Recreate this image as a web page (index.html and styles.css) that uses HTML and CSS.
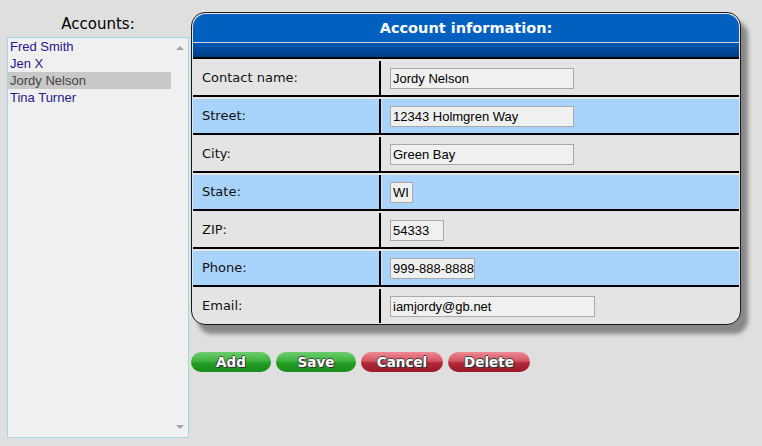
FILE: index.html
```html
<!DOCTYPE html>
<html lang="en">
<head>
	<meta charset="UTF-8">
	<title>Accounts</title>
	<link rel="stylesheet" href="styles.css">
</head>
<body>
	<div class="page">
		<div class="accounts">
			<div class="accounts-title">Accounts:</div>
			<div class="listbox">
				<ul class="list">
					<li>Fred Smith</li>
					<li>Jen X</li>
					<li class="selected">Jordy Nelson</li>
					<li>Tina Turner</li>
				</ul>
				<div class="scroll">
					<span class="arrow-up"></span>
					<span class="arrow-down"></span>
				</div>
			</div>
		</div>

		<div class="main">
			<div class="panel">
				<div class="panel-head">Account information:</div>
				<div class="panel-bar"></div>
				<div class="row">
					<div class="cell-label">Contact name:</div>
					<div class="cell-value"><input class="field w-long" type="text" value="Jordy Nelson"></div>
				</div>
				<div class="row alt">
					<div class="cell-label">Street:</div>
					<div class="cell-value"><input class="field w-long" type="text" value="12343 Holmgren Way"></div>
				</div>
				<div class="row">
					<div class="cell-label">City:</div>
					<div class="cell-value"><input class="field w-long" type="text" value="Green Bay"></div>
				</div>
				<div class="row alt">
					<div class="cell-label">State:</div>
					<div class="cell-value"><input class="field w-state" type="text" value="WI"></div>
				</div>
				<div class="row">
					<div class="cell-label">ZIP:</div>
					<div class="cell-value"><input class="field w-zip" type="text" value="54333"></div>
				</div>
				<div class="row alt">
					<div class="cell-label">Phone:</div>
					<div class="cell-value"><input class="field w-phone" type="text" value="999-888-8888"></div>
				</div>
				<div class="row last">
					<div class="cell-label">Email:</div>
					<div class="cell-value"><input class="field w-email" type="text" value="iamjordy@gb.net"></div>
				</div>
			</div>

			<div class="buttons">
				<a class="btn green" href="javascript:;">Add</a>
				<a class="btn green" href="javascript:;">Save</a>
				<a class="btn red wide" href="javascript:;">Cancel</a>
				<a class="btn red wide" href="javascript:;">Delete</a>
			</div>
		</div>
	</div>
</body>
</html>
```

FILE: styles.css
```css
* {
	margin: 0;
	padding: 0;
	box-sizing: border-box;
}
li {
	list-style: none;
}
a {
	text-decoration: none;
}
body {
	background: #dfdfdf;
	font-family: "DejaVu Sans", Verdana, sans-serif;
}
.page {
	display: flex;
	padding: 12px 0 0 7px;
}

/* accounts list */
.accounts {
	width: 182px;
}
.accounts-title {
	height: 25px;
	line-height: 25px;
	font-size: 15px;
	text-align: center;
	color: #000;
}
.listbox {
	display: flex;
	height: 401px;
	background: #f0f0f0;
	border: 1px solid #a6d6e6;
}
.list {
	flex: 1;
	font-family: "Liberation Sans", Arial, sans-serif;
	font-size: 13px;
	color: #26188c;
}
.list li {
	height: 17px;
	line-height: 17px;
	padding-left: 2px;
}
.list li.selected {
	background: #c8c8c8;
	color: #444;
}
.scroll {
	width: 17px;
	display: flex;
	flex-direction: column;
	justify-content: space-between;
	align-items: center;
	padding: 8px 0 8px 0;
}
.arrow-up, .arrow-down {
	width: 0;
	height: 0;
	border-left: 4px solid transparent;
	border-right: 4px solid transparent;
}
.arrow-up {
	border-bottom: 4px solid #a3a3a3;
}
.arrow-down {
	border-top: 4px solid #a3a3a3;
}

/* account panel */
.main {
	margin-left: 2px;
}
.panel {
	width: 550px;
	background: #e4e4e4;
	border: 1px solid #1a1a1a;
	border-radius: 14px;
	padding: 1px;
	box-shadow: 7px 9px 4px #888;
}
.panel-head {
	height: 28px;
	line-height: 28px;
	background: #0060c0;
	border-radius: 13px 13px 0 0;
	color: #fff;
	font-size: 14.5px;
	font-weight: bold;
	text-align: center;
	border-bottom: 1px solid #d6d6d6;
	height: 29px;
}
.panel-bar {
	height: 16px;
	background: linear-gradient(#0058b2, #003c86);
	border-bottom: 2px solid #000;
}
.row {
	display: flex;
	padding-top: 2px;
	border-bottom: 2px solid #000;
}
.row.last {
	border-bottom: none;
	border-radius: 0 0 13px 13px;
	overflow: hidden;
}
.cell-label {
	width: 188px;
	height: 34px;
	line-height: 34px;
	padding-left: 9px;
	font-size: 13px;
	color: #111;
	border-right: 2px solid #000;
	margin-right: 1px;
}
.cell-value {
	flex: 1;
	height: 34px;
	display: flex;
	align-items: center;
	padding-left: 8px;
}
.row.alt .cell-label, .row.alt .cell-value {
	background: #a8d3fd;
}
.field {
	height: 21px;
	padding: 0 0 0 2px;
	border: 1px solid #a9a9a9;
	background: #f0f0f0;
	font-family: "Liberation Sans", Arial, sans-serif;
	font-size: 13px;
	color: #000;
	outline: none;
}
.w-long {
	width: 184px;
}
.w-state {
	width: 23px;
}
.w-zip {
	width: 54px;
}
.w-phone {
	width: 85px;
}
.w-email {
	width: 205px;
}

/* buttons */
.buttons {
	display: flex;
	gap: 5px;
	margin-top: 27px;
}
.btn {
	display: block;
	width: 80px;
	height: 20px;
	line-height: 20px;
	border-radius: 10px;
	text-align: center;
	color: #fff;
	font-size: 13.5px;
	font-weight: bold;
	text-shadow: 1px 1px 0 #333, -1px 0 0 #444, 0 -1px 0 #444;
}
.btn.wide {
	width: 82px;
}
.btn.green {
	background: linear-gradient(#6ccd6c, #3fb43f 45%, #229c22 55%, #1a8c1a);
}
.btn.red {
	background: linear-gradient(#ee8a94, #d45563 45%, #b32838 55%, #991a28);
}
```
